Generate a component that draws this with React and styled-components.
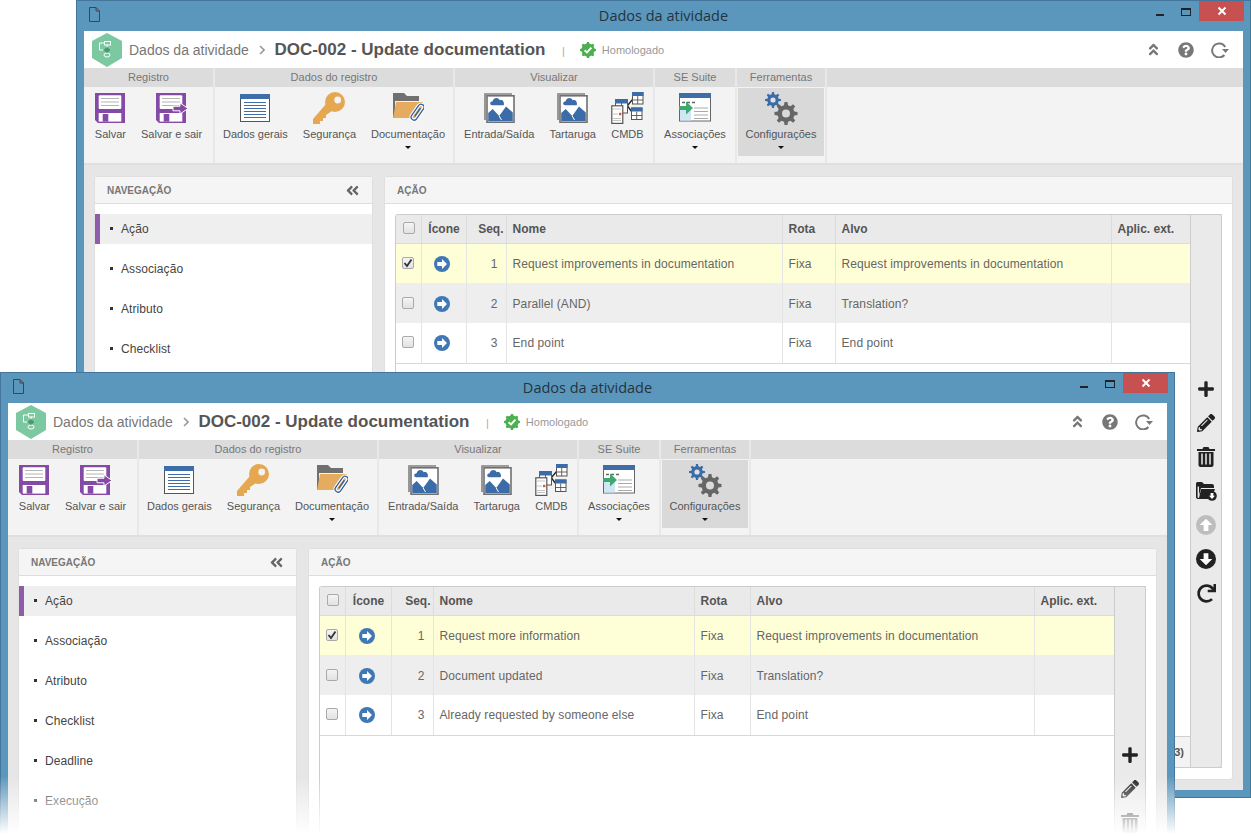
import React from 'react';
import styled, { createGlobalStyle } from 'styled-components';
import { FaPlus, FaPencilAlt, FaRedo, FaQuestionCircle, FaAngleDoubleUp, FaAngleDoubleLeft } from 'react-icons/fa';

const Global = createGlobalStyle`
  html, body { margin: 0; padding: 0; background: #fff; }
  body { font-family: "Liberation Sans", Arial, sans-serif; }
  * { box-sizing: border-box; }
`;

const Stage = styled.div`position: relative; width: 1251px; height: 836px; overflow: hidden; background: #fff;`;
const Win = styled.section`
  position: absolute; left: ${p => p.$left}px; top: ${p => p.$top}px; width: 1175px; height: ${p => p.$height}px;
  display: flex; flex-direction: column; background: #5b97bc; border: 1px solid #44759a;
  padding: 0 7px 7px;
`;
const TitleBar = styled.header`
  position: relative; height: 30px; flex: none; display: flex; align-items: center; justify-content: center;
  font: 14.5px/1 "Open Sans", sans-serif; color: #24343f;
`;
const DocIcon = styled.svg`position: absolute; left: 5px; top: 6px;`;
const Controls = styled.div`position: absolute; right: -1px; top: 0; display: flex; align-items: flex-start;`;
const MinBtn = styled.span`width: 8px; height: 2px; background: #222; margin: 13px 17px 0 0;`;
const MaxBtn = styled.span`width: 10px; height: 8px; border: 1px solid #222; border-top-width: 2px; margin: 7px 8px 0 0;`;
const CloseBtn = styled.span`
  width: 45px; height: 20px; background: #c75050; color: #fff; display: flex; align-items: center; justify-content: center;
`;
const Head = styled.div`
  height: 37px; flex: none; background: #fff; display: flex; align-items: center; padding: 0 0 0 8px; color: #777;
`;
const Crumb = styled.span`font-size: 14px; margin-left: 7px; color: #777;`;
const CrumbSep = styled.svg`margin: 0 9.5px 0 10px;`;
const DocTitle = styled.strong`font-size: 17px; color: #555;`;
const Pipe = styled.span`margin: 2px 15px 0 16.5px; font-size: 11px; color: #aaa;`;
const Status = styled.span`font-size: 11px; color: #999; margin-left: 6px;`;
const HeadActions = styled.div`margin-left: auto; display: flex; align-items: center; gap: 17px; padding-right: 14px; color: #777;`;
const Ribbon = styled.nav`
  flex: none; display: flex; height: 97px; background: #f3f3f3; border-bottom: 2px solid #dfdfdf;
`;
const Group = styled.div`
  width: ${p => p.$w}px; flex: ${p => (p.$fill ? 1 : 'none')}; display: flex; flex-direction: column;
  border-right: 2px solid #e8e8e8;
  &:last-child { border-right: 0; }
`;
const GroupHead = styled.div`
  height: 19px; background: #dcdcdc; text-align: center; font-size: 11px; line-height: 19px; color: #777;
`;
const GroupBody = styled.div`flex: 1; display: flex; justify-content: center; padding: 1px 1px 0;`;
const RibbonBtn = styled.button`
  all: unset; box-sizing: border-box; display: flex; flex-direction: column; align-items: center; height: 68px;
  padding: 4px 7.5px 0; font: 11px "Liberation Sans", sans-serif; color: #555; white-space: nowrap;
  background: ${p => (p.$active ? '#d9d9d9' : 'transparent')};
`;
const IconBox = styled.span`height: 32px; display: flex; align-items: center; justify-content: center;`;
const BtnLabel = styled.span`margin-top: 4px; line-height: 13px;`;
const Caret = styled.span`
  margin-top: 5px; width: 0; height: 0; border: 3px solid transparent; border-top: 3px solid #111; border-bottom: 0;
`;
const Content = styled.main`
  flex: 1; min-height: 0; background: #e6e6e6; padding: 11px 10px 10px 10px; display: flex; gap: 11px;
`;
const Panel = styled.div`
  background: #fff; border: 1px solid #dfdfdf; border-radius: 3px; display: flex; flex-direction: column;
  ${p => (p.$w ? `width: ${p.$w}px; flex: none;` : 'flex: 1; min-width: 0;')}
`;
const PanelHead = styled.div`
  height: 27px; flex: none; padding: 0 12px; background: #f5f5f5; border-bottom: 1px solid #dedede;
  display: flex; align-items: center; justify-content: space-between; font-size: 10px; font-weight: 700; color: #777;
`;
const NavList = styled.ul`list-style: none; margin: 0; padding: 10px 0 0; display: flex; flex-direction: column; gap: 10px;`;
const NavItem = styled.li`
  height: 30px; display: flex; align-items: center; font-size: 12px; letter-spacing: .08px; color: #444;
  background: ${p => (p.$active ? '#efefef' : 'transparent')};
  border-left: 5px solid ${p => (p.$active ? '#8e5ca8' : 'transparent')};
  padding-left: 10px;
  &::before { content: ""; width: 3px; height: 3px; background: #333; margin: -2px 8px 0 0; }
`;
const PanelBody = styled.div`flex: 1; min-height: 0; padding: 10px 10px 11px; display: flex;`;
const GridFrame = styled.div`flex: 1; min-width: 0; display: flex; border: 1px solid #ccc; border-right: 0; border-radius: 3px 0 0 3px;`;
const GridMain = styled.div`flex: 1; min-width: 0; display: flex; flex-direction: column; background: #fff;`;
const Table = styled.table`width: 100%; table-layout: fixed; border-collapse: collapse; font-size: 12px;`;
const Col = styled.col`width: ${p => p.$w}px;`;
const Th = styled.th`
  height: 28px; padding: 0 ${p => (p.$align === 'right' ? '2px' : '5px')} 0 6px; background: #eaeaea;
  border-right: 1px solid #dcdcdc; border-bottom: 1px solid #dcdcdc;
  font-weight: 700; color: #555; text-align: ${p => p.$align || 'left'};
  &:last-child { border-right: 0; }
`;
const Tr = styled.tr`background: ${p => p.$bg};`;
const Td = styled.td`
  height: 40px; padding: 2px ${p => (p.$align === 'right' ? '8px' : '5px')} 0 6px;
  border-right: 1px solid #e4e4e4; border-bottom: 1px solid transparent;
  color: #666; letter-spacing: .1px; text-align: ${p => p.$align || 'left'};
  &:last-child { border-right: 0; }
  tr:last-child > & { border-bottom-color: #d8d8d8; padding-top: 0; padding-bottom: 1px; }
`;
const IconTd = styled(Td)`
  padding-right: 8px; padding-left: 5px; text-align: center;
  svg { vertical-align: middle; }
`;
const CheckTd = styled(Td)`padding-left: 5px; text-align: center;`;
const CheckBox = styled.span`
  display: inline-flex; align-items: center; justify-content: center; width: 12px; height: 12px; vertical-align: middle;
  margin-bottom: 2px;
  border: 1px solid #a9a9a9; border-radius: 2px; background: linear-gradient(#f4f4f4, #e2e2e2);
`;
const GridFoot = styled.div`
  margin-top: auto; height: 31px; flex: none; border-top: 1px solid #d0d0d0; background: #f3f3f3;
  display: flex; align-items: center; justify-content: flex-end; padding-right: 6px; font-size: 11px; font-weight: 700; color: #555;
`;
const ToolRail = styled.div`
  width: 32px; flex: none; background: #eaeaea; border: 1px solid #ccc; border-radius: 0 3px 3px 0;
  margin: -1px 0;
  display: flex; flex-direction: column; align-items: center; justify-content: center; gap: 14px; color: #222;
`;
const ToolIcon = styled.span`height: 20px; display: flex; align-items: center; justify-content: center;`;
const Fade = styled.div`
  position: absolute; left: -1px; right: -1px; top: 403px; height: 70px; pointer-events: none;
  background: linear-gradient(rgba(255,255,255,0), #fff 58px);
`;

const gearPath = (cx, cy, R, r, n) => {
  const pts = [];
  for (let i = 0; i < n; i++) {
    const a = (i / n) * Math.PI * 2;
    const s = (Math.PI * 2) / n;
    [[-0.3, r], [-0.16, R], [0.16, R], [0.3, r]].forEach(([k, rad]) => {
      const t = a + k * s;
      pts.push(`${(cx + rad * Math.sin(t)).toFixed(2)} ${(cy - rad * Math.cos(t)).toFixed(2)}`);
    });
  }
  return `M${pts.join('L')}Z`;
};

const Floppy = ({ exit }) => (
  <svg width={exit ? 32 : 30} height="30" viewBox={exit ? '0 0 32 30' : '0 0 30 30'}>
    <path d="M0 0H30V30H3L0 27Z" fill="#8549a6" />
    <rect x="3.7" y="2.3" width="22.6" height="13.7" rx="1" fill="#fff" />
    <path d="M6 5.5H24M6 9H24M6 12.5H24" stroke="#b5b5b5" strokeWidth="1" />
    <rect x="3.7" y="20" width="22.6" height="8.6" fill="#fff" />
    <rect x="7.7" y="21" width="5.6" height="7.6" fill="#8549a6" />
    {exit && <path d="M17 13.2H24V9.8L32 15.5L24 21V17.8H17Z" fill="#8549a6" stroke="#fff" strokeWidth="1" />}
  </svg>
);
const WinIcon = () => (
  <svg width="30" height="28" viewBox="0 0 30 28">
    <rect x=".5" y=".5" width="29" height="27" fill="#fff" stroke="#555" />
    <rect width="30" height="5" fill="#3f6da8" />
    <path d="M4 8.5H26M4 11.5H26M4 14.5H26M4 17.5H26M4 20.5H26M4 23.5H26" stroke="#3f6da8" strokeWidth="1" />
  </svg>
);
const KeyIcon = () => (
  <svg width="32" height="32" viewBox="0 0 32 32">
    <path d="M13 12L0 27V32H7V29H10V26H13V23L19 19Z" fill="#e5a850" />
    <circle cx="22" cy="10" r="10" fill="#e5a850" />
    <circle cx="24.7" cy="8" r="3.4" fill="#f3f3f3" />
  </svg>
);
const FolderIcon = () => (
  <svg width="31" height="30" viewBox="0 0 31 30">
    <path d="M0 0H11L14 3H26V8H2V25H0Z" fill="#707070" />
    <path d="M3 9H30L26 25H0Z" fill="#e5ac60" />
    <g transform="rotate(35 24 20)" fill="none" stroke="#fff" strokeWidth="3.4">
      <rect x="21" y="10" width="6" height="18" rx="3" />
    </g>
    <g transform="rotate(35 24 20)" fill="none" stroke="#2f5f9f" strokeWidth="1.3">
      <rect x="21" y="10" width="6" height="18" rx="3" />
      <path d="M24 14V24" />
    </g>
  </svg>
);
const ImageIcon = () => (
  <svg width="31" height="30" viewBox="0 0 31 30">
    <path d="M1 27V1H28" fill="none" stroke="#808080" strokeWidth="1.6" />
    <rect x="3" y="2.8" width="27" height="26.4" fill="#fff" stroke="#707070" strokeWidth="1.6" />
    <path d="M4.2 28V20L8.7 16L15.2 23L22 13.5L28.8 19.5V28Z" fill="#3c6ca8" />
    <path d="M15.2 23L17.5 27" stroke="#fff" strokeWidth="1" />
    <path d="M8.3 12.2C5.5 12.2 5.5 8.4 8.6 8.2C9.6 4 14.6 4 15.6 7.2C18.4 6.4 20.6 8.6 19.8 12.2Z" fill="#3c6ca8" />
  </svg>
);
const CmdbIcon = () => (
  <svg width="33" height="33" viewBox="0 0 33 33">
    <path d="M16.5 13.5L21.5 7.5M16.5 14L21 20" stroke="#222" strokeWidth="1.3" />
    <g fill="#fff" stroke="#555" strokeWidth="1">
      <rect x="21.5" y=".5" width="10.5" height="11.5" />
      <rect x="20.5" y="16" width="10.5" height="11.5" />
      <rect x="4.5" y="7.5" width="12" height="13.5" />
    </g>
    <path d="M21 0H32.5V4H21ZM20 15.5H31.5V19.5H20ZM4 7H17V11.5H4Z" fill="#3c6ca8" />
    <path d="M26.7 4V12M21.5 8H32M25.7 19.5V27.5M20.5 23.5H31M10.5 11V21" fill="none" stroke="#555" strokeWidth=".9" />
    <rect x=".8" y="13.8" width="11" height="17.6" fill="#fff" stroke="#555" strokeWidth="1.2" />
    <path d="M2.5 17H10M2.5 22H7M2.5 26.5H10M2.5 28.5H10" stroke="#888" strokeWidth="1" strokeDasharray="1 1" />
    <rect x="8" y="20.8" width="2.4" height="2.4" fill="#e0562d" />
  </svg>
);
const AssocIcon = () => (
  <svg width="32" height="30" viewBox="0 0 32 30">
    <rect x=".5" y="1" width="31" height="27" fill="#fff" stroke="#666" />
    <rect width="32" height="5" y="0" fill="#3f6da8" />
    <path d="M3 9.5H6M8 9.5H11M13 9.5H16" stroke="#666" strokeWidth="1.6" />
    <rect x="1" y="13" width="11" height="14.5" fill="#cfe6f5" />
    <path d="M15 15H29M15 18.5H29M15 22H29M15 25.5H29" stroke="#aaa" />
    <path d="M0 13H7V8.5L14 15L7 21.5V17H0Z" fill="#3fa86f" />
  </svg>
);
const GearsIcon = () => (
  <svg width="33" height="33" viewBox="0 0 33 33">
    <path d={gearPath(8, 8, 8, 5.8, 8)} fill="#3a6ca8" />
    <circle cx="8" cy="8" r="2.6" fill="#e0e0e0" />
    <path d={gearPath(21, 21.5, 11.6, 8.6, 8)} fill="#666" />
    <circle cx="21" cy="21.5" r="4" fill="#d9d9d9" />
  </svg>
);
const Logo = () => (
  <svg width="30" height="34" viewBox="0 0 30 34">
    <path d="M15 0L30 8V25L15 34L0 25V8Z" fill="#7cc8a0" />
    <g fill="none" stroke="#fff" strokeWidth="1">
      <rect x="12.5" y="8.5" width="6" height="3.5" />
      <path d="M7.5 10H12.5M7.5 10V17H11" />
      <ellipse cx="15" cy="22" rx="3" ry="2" />
      <path d="M15 11.5V20" />
    </g>
    <path d="M15 14.2L18 17L15 19.8L12 17Z" fill="#4b9a6f" stroke="#3d8a60" strokeWidth=".5" />
  </svg>
);
const Badge = () => (
  <svg width="16" height="16" viewBox="0 0 16 16">
    <path d={gearPath(8, 8, 8, 6.4, 8)} fill="#4caf50" />
    <circle cx="8" cy="8" r="6.4" fill="#4caf50" />
    <path d="M4.6 8.2L7 10.4L11.4 5.6" fill="none" stroke="#fff" strokeWidth="2" />
  </svg>
);
const Refresh = () => (
  <svg width="18" height="16" viewBox="0 0 18 16">
    <path d="M13.4 13A7 7 0 1 1 14.2 5" fill="none" stroke="#777" strokeWidth="2" />
    <path d="M11 7H18L14.5 11Z" fill="#777" />
  </svg>
);
const ArrowDisc = ({ size = 16, color, turn = 0 }) => (
  <svg width={size} height={size} viewBox="0 0 16 16">
    <circle cx="8" cy="8" r="8" fill={color} />
    <path d="M3.3 6.1H8V3L13 8L8 13V9.9H3.3Z" fill="#fff" transform={`rotate(${turn} 8 8)`} />
  </svg>
);
const TrashIcon = () => (
  <svg width="18" height="20" viewBox="0 0 18 20">
    <path d="M6.5 0H11.5L12.5 2H18V4H0V2H5.5Z" fill="#222" />
    <path d="M1.5 5H16.5V18Q16.5 20 14.5 20H3.5Q1.5 20 1.5 18Z" fill="#222" />
    <path d="M5 6.5V17.5M9 6.5V17.5M13 6.5V17.5" stroke="#eaeaea" strokeWidth="1.5" />
  </svg>
);
const FolderDown = () => (
  <svg width="21" height="20" viewBox="0 0 21 20">
    <path d="M0 2.5Q0 1 1.5 1H6L8 3H16Q18 3 18 5V7H5L3 14V5.5H1.6V16Q1.6 17 3 17H12V18H2Q0 18 0 16Z" fill="#222" />
    <path d="M5 8H19L17.5 12A6 6 0 0 0 12 17H3Z" fill="#222" />
    <circle cx="16" cy="15" r="4.8" fill="#222" />
    <path d="M14.6 12H17.4V14.8H19L16 18L13 14.8H14.6Z" fill="#fff" />
  </svg>
);

const groups = [
  { t: 'Registro', w: 131, b: [['Salvar', <Floppy />], ['Salvar e sair', <Floppy exit />]] },
  { t: 'Dados do registro', w: 240, b: [['Dados gerais', <WinIcon />], ['Segurança', <KeyIcon />], ['Documentação', <FolderIcon />, 1]] },
  { t: 'Visualizar', w: 200, b: [['Entrada/Saída', <ImageIcon />], ['Tartaruga', <ImageIcon />], ['CMDB', <CmdbIcon />]] },
  { t: 'SE Suite', w: 82, b: [['Associações', <AssocIcon />, 1]] },
  { t: 'Ferramentas', w: 90, b: [['Configurações', <GearsIcon />, 1, 1]] },
];
const navItems = ['Ação', 'Associação', 'Atributo', 'Checklist', 'Deadline', 'Execução'];
const tools = [
  <FaPlus size={18} />, <FaPencilAlt size={18} />, <TrashIcon />, <FolderDown />,
  <ArrowDisc size={20} color="#bdbdbd" turn={-90} />, <ArrowDisc size={20} color="#222" turn={90} />, <FaRedo size={19} />,
];
const rowBg = ['#ffffd7', '#eeeeee', '#ffffff'];

const Window = ({ left, top, height, cols, rows, fade, nav, foot }) => (
  <Win $left={left} $top={top} $height={height}>
    <TitleBar>
      <DocIcon width="11" height="15" viewBox="0 0 11 15"><path d="M.5.5H7L10.5 4V14.5H.5ZM7 .5V4H10.5" fill="none" stroke="#444" /></DocIcon>
      Dados da atividade
      <Controls>
        <MinBtn /><MaxBtn />
        <CloseBtn><svg width="10" height="10" viewBox="0 0 10 10"><path d="M1.5 1.5L8.5 8.5M8.5 1.5L1.5 8.5" stroke="#fff" strokeWidth="2" /></svg></CloseBtn>
      </Controls>
    </TitleBar>
    <Head>
      <Logo />
      <Crumb>Dados da atividade</Crumb>
      <CrumbSep width="6" height="10" viewBox="0 0 6 10"><path d="M1 1L5 5L1 9" fill="none" stroke="#999" strokeWidth="1.6" /></CrumbSep>
      <DocTitle>DOC-002 - Update documentation</DocTitle>
      <Pipe>|</Pipe>
      <Badge />
      <Status>Homologado</Status>
      <HeadActions>
        <FaAngleDoubleUp size={15} />
        <FaQuestionCircle size={16} />
        <Refresh />
      </HeadActions>
    </Head>
    <Ribbon>
      {groups.map(g => (
        <Group key={g.t} $w={g.w}>
          <GroupHead>{g.t}</GroupHead>
          <GroupBody>
            {g.b.map(([label, icon, caret, active]) => (
              <RibbonBtn key={label} $active={active}>
                <IconBox>{icon}</IconBox>
                <BtnLabel>{label}</BtnLabel>
                {caret && <Caret />}
              </RibbonBtn>
            ))}
          </GroupBody>
        </Group>
      ))}
      <Group $fill><GroupHead /></Group>
    </Ribbon>
    <Content>
      <Panel $w={279}>
        <PanelHead>NAVEGAÇÃO <FaAngleDoubleLeft size={15} color="#666" /></PanelHead>
        <NavList>
          {navItems.slice(0, nav).map((n, i) => <NavItem key={n} $active={i === 0}>{n}</NavItem>)}
        </NavList>
      </Panel>
      <Panel>
        <PanelHead>AÇÃO</PanelHead>
        <PanelBody>
          <GridFrame>
            <GridMain>
              <Table>
                <colgroup>{cols.map((w, i) => <Col key={i} $w={w} />)}</colgroup>
                <thead>
                  <tr>
                    <Th $align="center"><CheckBox /></Th>
                    <Th $align="center">Ícone</Th>
                    <Th $align="right">Seq.</Th>
                    <Th>Nome</Th><Th>Rota</Th><Th>Alvo</Th><Th>Aplic. ext.</Th>
                  </tr>
                </thead>
                <tbody>
                  {rows.map((r, i) => (
                    <Tr key={i} $bg={rowBg[i]}>
                      <CheckTd>
                        <CheckBox>
                          {i === 0 && <svg width="10" height="10" viewBox="0 0 10 10"><path d="M1.5 5L4 8L8.5 1.5" fill="none" stroke="#333" strokeWidth="1.8" /></svg>}
                        </CheckBox>
                      </CheckTd>
                      <IconTd><ArrowDisc color="#3f78b5" /></IconTd>
                      <Td $align="right">{i + 1}</Td>
                      <Td>{r[0]}</Td>
                      <Td>Fixa</Td>
                      <Td>{r[1]}</Td>
                      <Td />
                    </Tr>
                  ))}
                </tbody>
              </Table>
              {foot && <GridFoot>(3)</GridFoot>}
            </GridMain>
            <ToolRail>
              {tools.map((icon, i) => <ToolIcon key={i}>{icon}</ToolIcon>)}
            </ToolRail>
          </GridFrame>
        </PanelBody>
      </Panel>
    </Content>
    {fade && <Fade />}
  </Win>
);

export default function App() {
  return (
    <Stage>
      <Global />
      <Window
        left={76} top={0} height={798} nav={4} foot
        cols={[25, 45, 40, 276, 53, 276, 80]}
        rows={[
          ['Request improvements in documentation', 'Request improvements in documentation'],
          ['Parallel (AND)', 'Translation?'],
          ['End point', 'End point'],
        ]}
      />
      <Window
        left={0} top={372} height={786} nav={6} fade
        cols={[25, 46, 42, 261, 56, 284, 80]}
        rows={[
          ['Request more information', 'Request improvements in documentation'],
          ['Document updated', 'Translation?'],
          ['Already requested by someone else', 'End point'],
        ]}
      />
    </Stage>
  );
}
